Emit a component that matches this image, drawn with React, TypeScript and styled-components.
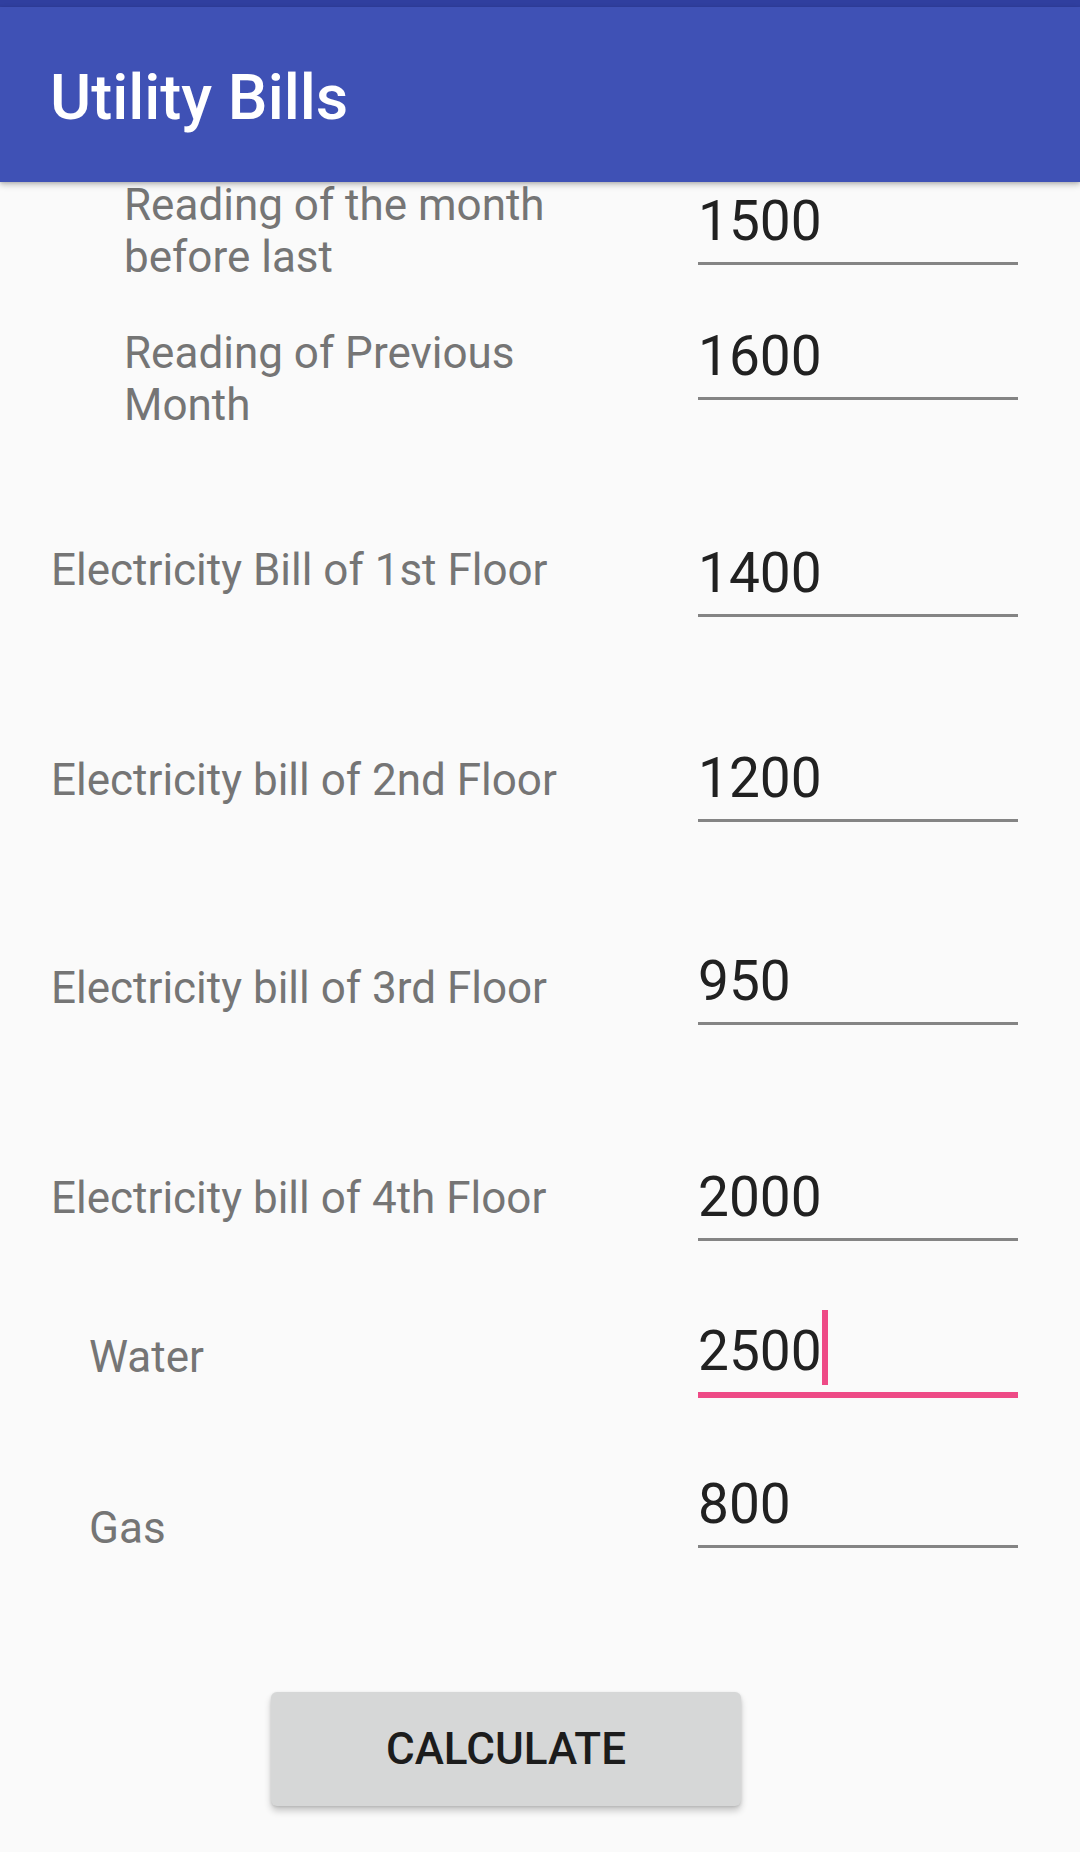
import React from "react";
import styled, { createGlobalStyle } from "styled-components";

const GlobalStyle = createGlobalStyle`
  html, body {
    margin: 0;
    padding: 0;
    background: #fafafa;
  }
  body {
    font-family: Roboto, "Noto Sans", "Liberation Sans", sans-serif;
  }
  * { box-sizing: border-box; }
`;

const Page = styled.div`
  width: 1080px;
  min-height: 1852px;
  background: #fafafa;
  display: flex;
  flex-direction: column;
  overflow: hidden;
`;

const StatusBar = styled.div`
  height: 7px;
  background: #303f9f;
  flex: none;
`;

const AppBar = styled.header`
  position: relative;
  z-index: 2;
  height: 175px;
  flex: none;
  background: #3f51b5;
  padding: 56px 0 0 50px;
  box-shadow: 0 3px 6px rgba(0, 0, 0, 0.22), 0 1px 3px rgba(0, 0, 0, 0.12);
`;

const Title = styled.h1`
  margin: 0;
  font-family: Roboto, "Noto Sans", sans-serif;
  font-weight: 500;
  font-size: 63px;
  line-height: 70px;
  color: #ffffff;
`;

const Content = styled.main`
  display: flex;
  flex-direction: column;
`;

const Row = styled.div<{ $top: number }>`
  display: grid;
  grid-template-columns: 1fr 320px;
  align-items: start;
  padding-right: 62px;
  margin-top: ${(p) => p.$top}px;
`;

const Label = styled.div<{ $indent: number; $shift: number }>`
  padding-left: ${(p) => p.$indent}px;
  margin-top: ${(p) => p.$shift}px;
  font-family: Roboto, "Noto Sans", sans-serif;
  font-size: 44px;
  line-height: 52px;
  color: #757575;
`;

const Field = styled.div<{ $shift: number; $focused?: boolean }>`
  margin-top: ${(p) => p.$shift}px;
  height: ${(p) => (p.$focused ? 79 : 76)}px;
  padding-bottom: 9px;
  border-bottom: ${(p) => (p.$focused ? "6px solid #ee4a86" : "3px solid #848484")};
`;

const Value = styled.div`
  font-family: Roboto, "Noto Sans", sans-serif;
  font-size: 55px;
  line-height: 64px;
  color: #212121;
  white-space: nowrap;
`;

const Caret = styled.span`
  display: inline-block;
  position: relative;
  width: 6px;
  height: 0;
  vertical-align: baseline;

  &::after {
    content: "";
    position: absolute;
    left: 0;
    bottom: -15px;
    width: 6px;
    height: 75px;
    background: #ee4a86;
  }
`;

const Button = styled.button<{ $top: number }>`
  margin: ${(p) => p.$top}px 0 0 271px;
  width: 470px;
  height: 114px;
  border: none;
  border-radius: 6px;
  background: #d6d7d7;
  box-shadow: 0 5px 7px rgba(0, 0, 0, 0.2), 0 1px 3px rgba(0, 0, 0, 0.12);
  font-family: Roboto, "Noto Sans", sans-serif;
  font-weight: 500;
  font-size: 44px;
  color: #1c1c1c;
  padding: 0;
  cursor: pointer;
`;

type Item = {
  label: React.ReactNode;
  value: string;
  indent: number;
  top: number;
  labelShift: number;
  fieldShift: number;
  focused?: boolean;
};

const items: Item[] = [
  {
    label: (
      <>
        Reading of the month
        <br />
        before last
      </>
    ),
    value: "1500",
    indent: 124,
    top: -3,
    labelShift: 0,
    fieldShift: 10,
  },
  {
    label: (
      <>
        Reading of Previous
        <br />
        Month
      </>
    ),
    value: "1600",
    indent: 124,
    top: 41,
    labelShift: 3,
    fieldShift: 0,
  },
  { label: "Electricity Bill of 1st Floor", value: "1400", indent: 51, top: 110, labelShift: 3, fieldShift: 0 },
  { label: "Electricity bill of 2nd Floor", value: "1200", indent: 51, top: 129, labelShift: 8, fieldShift: 0 },
  { label: "Electricity bill of 3rd Floor", value: "950", indent: 51, top: 127, labelShift: 13, fieldShift: 0 },
  { label: "Electricity bill of 4th Floor", value: "2000", indent: 51, top: 140, labelShift: 7, fieldShift: 0 },
  { label: "Water", value: "2500", indent: 89, top: 78, labelShift: 12, fieldShift: 0, focused: true },
  { label: "Gas", value: "800", indent: 89, top: 74, labelShift: 30, fieldShift: 0 },
];

export default function App() {
  return (
    <Page>
      <GlobalStyle />
      <StatusBar />
      <AppBar>
        <Title>Utility Bills</Title>
      </AppBar>
      <Content>
        {items.map((it, i) => (
          <Row key={i} $top={it.top}>
            <Label $indent={it.indent} $shift={it.labelShift}>
              {it.label}
            </Label>
            <Field $shift={it.fieldShift} $focused={it.focused}>
              <Value>
                {it.value}
                {it.focused && <Caret />}
              </Value>
            </Field>
          </Row>
        ))}
        <Button $top={138}>CALCULATE</Button>
      </Content>
    </Page>
  );
}
